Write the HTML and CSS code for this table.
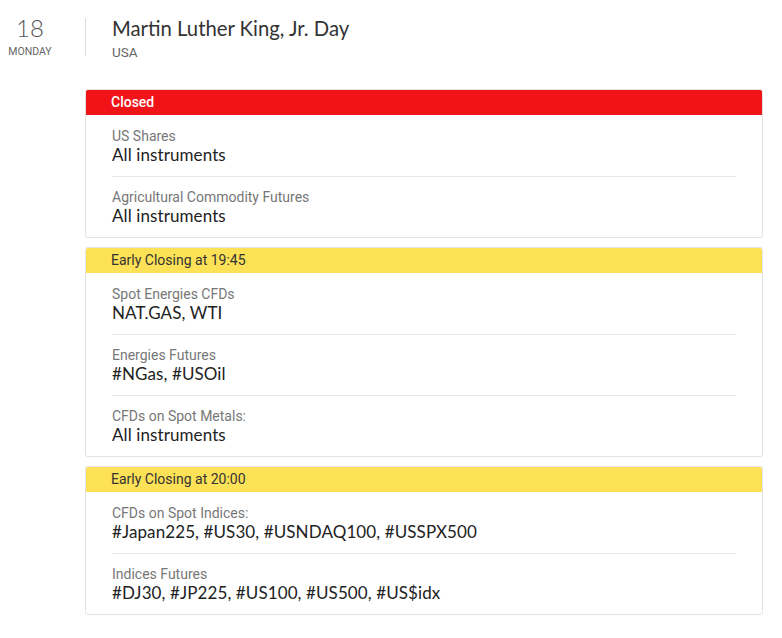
FILE: index.html
```html
<!DOCTYPE html>
<html>
<head>
<meta charset="utf-8">
<link rel="stylesheet" href="styles.css">
</head>
<body>
<div class="page">
  <div class="day-head">
    <div class="date">
      <div class="date-num">18</div>
      <div class="date-dow">MONDAY</div>
    </div>
    <div class="divider"></div>
    <div class="holiday">
      <div class="holiday-name">Martin Luther King, Jr. Day</div>
      <div class="holiday-country">USA</div>
    </div>
  </div>

  <div class="cards">
    <div class="card">
      <div class="card-head closed">Closed</div>
      <div class="card-body">
        <div class="row">
          <div class="row-label">US Shares</div>
          <div class="row-value">All instruments</div>
        </div>
        <div class="row">
          <div class="row-label">Agricultural Commodity Futures</div>
          <div class="row-value">All instruments</div>
        </div>
      </div>
    </div>

    <div class="card">
      <div class="card-head early">Early Closing at 19:45</div>
      <div class="card-body">
        <div class="row">
          <div class="row-label">Spot Energies CFDs</div>
          <div class="row-value">NAT.GAS, WTI</div>
        </div>
        <div class="row">
          <div class="row-label">Energies Futures</div>
          <div class="row-value">#NGas, #USOil</div>
        </div>
        <div class="row">
          <div class="row-label">CFDs on Spot Metals:</div>
          <div class="row-value">All instruments</div>
        </div>
      </div>
    </div>

    <div class="card">
      <div class="card-head early">Early Closing at 20:00</div>
      <div class="card-body">
        <div class="row">
          <div class="row-label">CFDs on Spot Indices:</div>
          <div class="row-value">#Japan225, #US30, #USNDAQ100, #USSPX500</div>
        </div>
        <div class="row">
          <div class="row-label">Indices Futures</div>
          <div class="row-value">#DJ30, #JP225, #US100, #US500, #US$idx</div>
        </div>
      </div>
    </div>
  </div>
</div>
</body>
</html>
```

FILE: styles.css
```css
* { box-sizing: border-box; }
html, body { margin: 0; padding: 0; background: #fff; }
body { font-family: Roboto, "Liberation Sans", sans-serif; color: #222; }

.page { padding-top: 14px; width: 763px; }

.day-head { display: flex; align-items: stretch; height: 56px; }
.date { width: 60px; display: flex; flex-direction: column; align-items: center; }
.date-num { font-family: Lato, sans-serif; font-size: 24px; line-height: 28px; color: #555; font-weight: 300; }
.date-dow { font-size: 10.5px; line-height: 18px; color: #666; margin-top: 1px; }
.divider { width: 1px; background: #ddd; margin-left: 25px; margin-top: 4px; height: 38px; }
.holiday { padding-left: 26px; }
.holiday-name { font-family: Lato, sans-serif; font-size: 20.3px; line-height: 28px; color: #333; }
.holiday-country { font-size: 13.5px; line-height: 18px; color: #666; margin-top: 1px; }

.cards { margin-left: 85px; margin-top: 19px; display: flex; flex-direction: column; gap: 9px; }
.card { border: 1px solid #e3e3e3; border-radius: 3px; overflow: hidden; }
.card-head { height: 26px; line-height: 26px; padding-left: 26px; font-size: 14px; margin: -1px -1px 0 -1px; }
.card-head.closed { background: #f01418; color: #fff; font-weight: 500; }
.card-head.early { background: #fde157; color: #333; }
.card-body { padding: 0 26px; }
.row { padding: 11px 0; border-top: 1px solid #e6e6e6; }
.row:first-child { border-top: none; padding-top: 12px; }
.row-label { font-size: 14px; line-height: 18px; color: #777; }
.row-value { font-family: Lato, sans-serif; font-size: 17px; line-height: 20px; color: #222; letter-spacing: 0.1px; }
```
